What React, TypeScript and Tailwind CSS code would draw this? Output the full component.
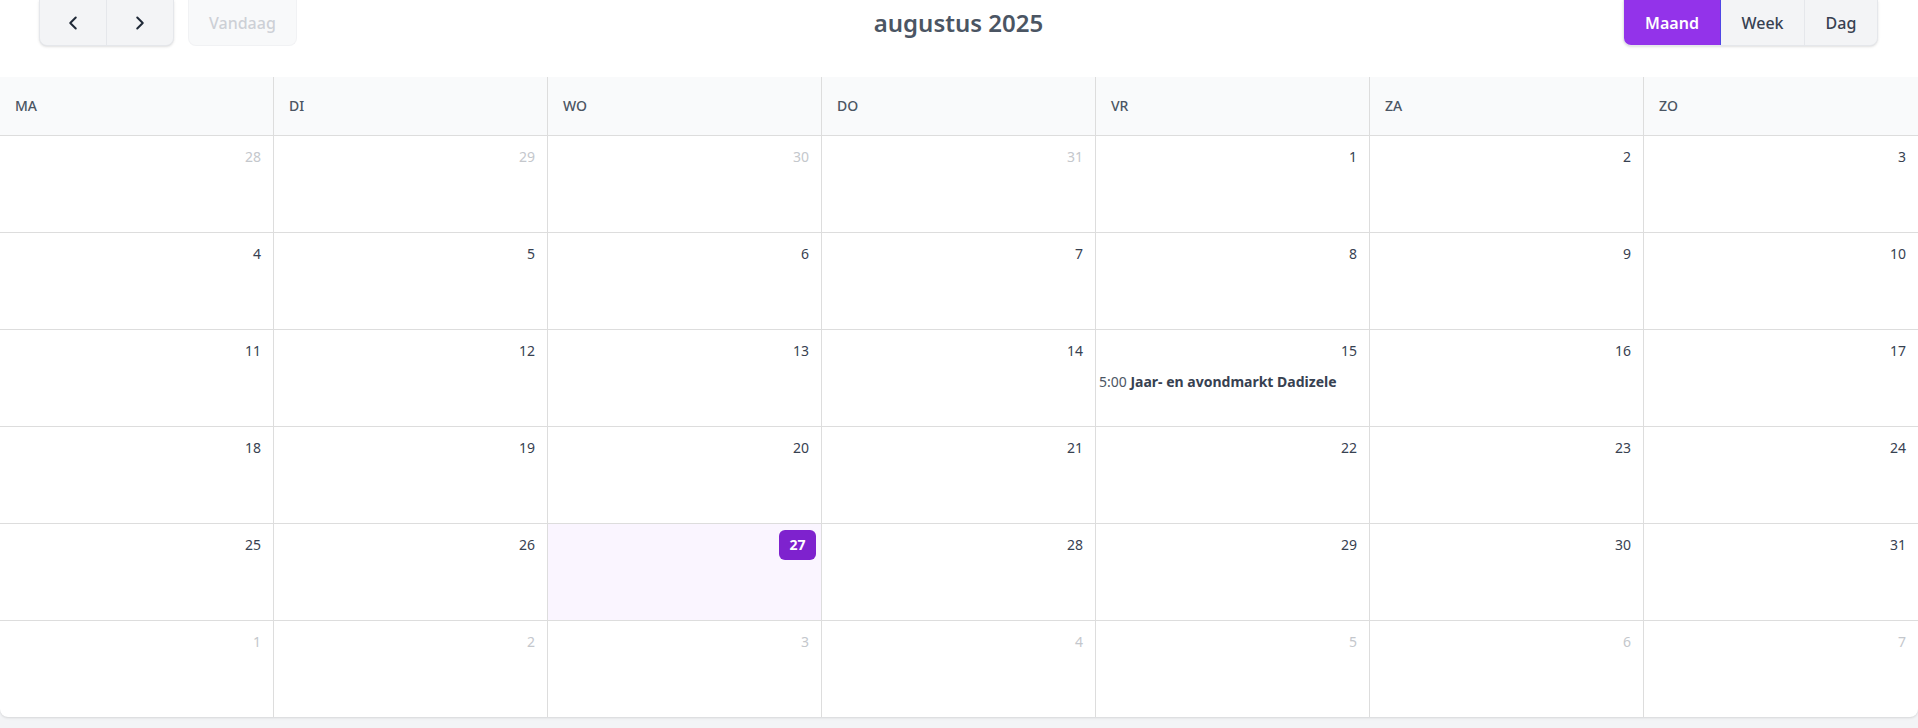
import { ChevronLeft, ChevronRight } from "lucide-react";

interface Day {
  date: number;
  inMonth: boolean;
  isToday?: boolean;
}

interface CalEvent {
  date: number;
  time: string;
  title: string;
}

const weekdays = ["MA", "DI", "WO", "DO", "VR", "ZA", "ZO"];

const events: CalEvent[] = [
  { date: 15, time: "5:00", title: "Jaar- en avondmarkt Dadizele" },
];

function buildWeeks(): Day[][] {
  const days: Day[] = [];
  for (let d = 28; d <= 31; d++) days.push({ date: d, inMonth: false });
  for (let d = 1; d <= 31; d++)
    days.push({ date: d, inMonth: true, isToday: d === 27 });
  for (let d = 1; d <= 7; d++) days.push({ date: d, inMonth: false });

  const weeks: Day[][] = [];
  for (let i = 0; i < days.length; i += 7) weeks.push(days.slice(i, i + 7));
  return weeks;
}

export default function App() {
  const weeks = buildWeeks();

  return (
    <div
      className="min-h-screen bg-[#f3f4f6]"
      style={{ fontFamily: '"Noto Sans", "Open Sans", sans-serif' }}
    >
      <div className="bg-white rounded-b-lg shadow">
        {/* toolbar */}
        <div className="flex items-center justify-between pl-[39px] pr-10 mb-[31px]">
          <div className="flex items-center w-[420px]">
            <div className="flex h-[46px] rounded-b-lg bg-[#f3f4f6] border border-t-0 border-[#e5e7eb] shadow-sm">
              <button className="w-[67px] flex items-center justify-center border-r border-[#e5e7eb] text-[#1f2937]">
                <ChevronLeft size={22} strokeWidth={2.2} />
              </button>
              <button className="w-[66px] flex items-center justify-center text-[#1f2937]">
                <ChevronRight size={22} strokeWidth={2.2} />
              </button>
            </div>
            <button
              disabled
              className="ml-3.5 h-[46px] px-5 rounded-b-lg bg-[#f3f4f6] border border-t-0 border-[#e5e7eb] text-base font-medium text-[#9ca3af] opacity-50"
            >
              Vandaag
            </button>
          </div>

          <h2 className="text-2xl font-semibold text-[#4b5563]">augustus 2025</h2>

          <div className="flex justify-end w-[420px]">
            <div className="flex h-[46px] rounded-b-lg bg-[#f3f4f6] border border-t-0 border-[#e5e7eb] shadow-sm overflow-hidden">
              <button className="w-[97px] bg-[#9333ea] border-r border-[#4f46e5] text-white text-base font-semibold">
                Maand
              </button>
              <button className="w-[84px] border-r border-[#e5e7eb] text-base font-medium text-[#374151]">
                Week
              </button>
              <button className="w-[72px] text-base font-medium text-[#374151]">
                Dag
              </button>
            </div>
          </div>
        </div>

        {/* weekday header */}
        <div className="grid grid-cols-7 h-[59px] bg-[#f9fafb] border-b border-[#dddddd]">
          {weekdays.map((w, i) => (
            <div
              key={w}
              className={`flex items-center pl-[15px] text-sm font-medium text-[#4b5563] ${
                i < 6 ? "border-r border-[#dddddd]" : ""
              }`}
            >
              {w}
            </div>
          ))}
        </div>

        {/* month grid */}
        {weeks.map((week, wi) => (
          <div
            key={wi}
            className={`grid grid-cols-7 ${
              wi < weeks.length - 1 ? "h-[97px] border-b border-[#dddddd]" : "h-[96px]"
            }`}
          >
            {week.map((day, di) => {
              const dayEvents = day.inMonth
                ? events.filter((e) => e.date === day.date)
                : [];
              return (
                <div
                  key={di}
                  className={`flex flex-col ${di < 6 ? "border-r border-[#dddddd]" : ""} ${
                    day.isToday ? "bg-[#faf5ff]" : ""
                  }`}
                >
                  <div className="flex justify-end mt-1.5 mr-[5px]">
                    {day.isToday ? (
                      <span className="h-[30px] min-w-[37px] px-[7px] flex items-center justify-center rounded-md bg-[#7e22ce] text-sm font-bold text-white">
                        {day.date}
                      </span>
                    ) : (
                      <span
                        className={`h-[30px] px-[7px] flex items-center text-sm ${
                          day.inMonth ? "text-[#374151]" : "text-[#c4c7cc]"
                        }`}
                      >
                        {day.date}
                      </span>
                    )}
                  </div>
                  {dayEvents.map((ev) => (
                    <div
                      key={ev.title}
                      className="mt-[6px] mx-[3px] text-sm leading-5 whitespace-nowrap"
                    >
                      <span className="text-[#4b5563]">{ev.time}</span>{" "}
                      <span className="font-bold text-[#374151]">{ev.title}</span>
                    </div>
                  ))}
                </div>
              );
            })}
          </div>
        ))}
      </div>
    </div>
  );
}
